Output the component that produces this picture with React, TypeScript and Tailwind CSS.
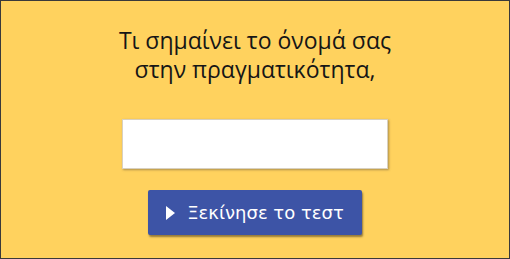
export default function App() {
  return (
    <div className="h-[259px] w-[510px] overflow-hidden border border-[#3a3a3a] bg-[#ffd25e]">
      <div className="flex flex-col items-center pt-[25px]">
        <h1
          className="text-center text-[23px] leading-[29px] font-medium text-[#161616]"
          style={{ fontFamily: '"Open Sans", "Noto Sans", sans-serif' }}
        >
          Τι σημαίνει το όνομά σας
          <br />
          στην πραγματικότητα,
        </h1>
        <input
          type="text"
          className="mt-[35px] h-[50px] w-[266px] border border-[#d8d0c0] bg-white shadow-[1px_1px_2px_rgba(120,100,60,0.6)] outline-none"
        />
        <button
          type="button"
          className="mt-[21px] flex h-[45px] w-[214px] items-center justify-center gap-[12px] rounded-[2px] bg-[#3d54a6] text-[18px] text-white shadow-[1px_2px_2px_rgba(60,50,30,0.55)]"
          style={{ fontFamily: '"DejaVu Sans", Verdana, sans-serif' }}
        >
          <svg width="9" height="14" viewBox="0 0 9 14" aria-hidden>
            <path d="M0 0 L9 7 L0 14 Z" fill="white" />
          </svg>
          Ξεκίνησε το τεστ
        </button>
      </div>
    </div>
  );
}
